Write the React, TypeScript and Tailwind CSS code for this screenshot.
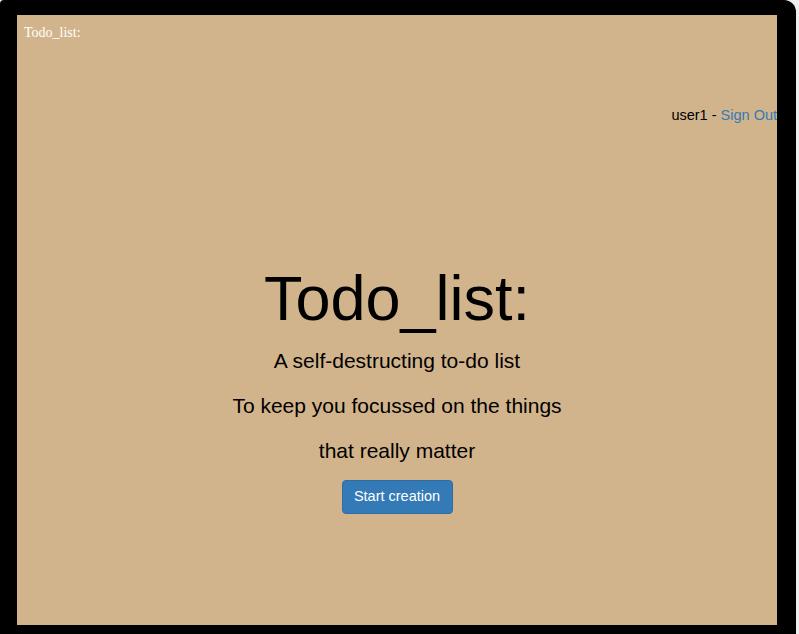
export default function App() {
  return (
    <div className="h-[634px] w-[799px] bg-[#efefef]">
      <div className="h-[634px] w-[796px] rounded-tl-[4px] rounded-tr-[12px] bg-black pl-[17px] pt-[15px]">
        <div className="flex h-[610px] w-[760px] flex-col overflow-hidden bg-[#d2b48c] font-['Liberation_Sans',Arial,sans-serif]">
          <div className="pl-[7px] pt-[10px] font-['Liberation_Serif','Times_New_Roman',serif] text-[14px] leading-[16px] text-white">
            Todo_list:
          </div>
          <div className="mt-[65px] text-right text-[14.5px] leading-[18px] text-black">
            user1 - <span className="text-[#337ab7]">Sign Out</span>
          </div>
          <div className="mt-[138px] flex flex-col items-center text-black">
            <h1 className="text-[63px] leading-[72px]">Todo_list:</h1>
            <p className="mt-[13px] text-[21px] leading-[28px]">A self-destructing to-do list</p>
            <p className="mt-[17px] text-[21px] leading-[28px]">To keep you focussed on the things</p>
            <p className="mt-[17px] text-[21px] leading-[28px]">that really matter</p>
            <button className="mt-[15px] h-[34px] w-[111px] rounded-[4px] border border-[#2e6da4] bg-[#337ab7] text-[14.5px] text-white">
              Start creation
            </button>
          </div>
        </div>
      </div>
    </div>
  );
}
